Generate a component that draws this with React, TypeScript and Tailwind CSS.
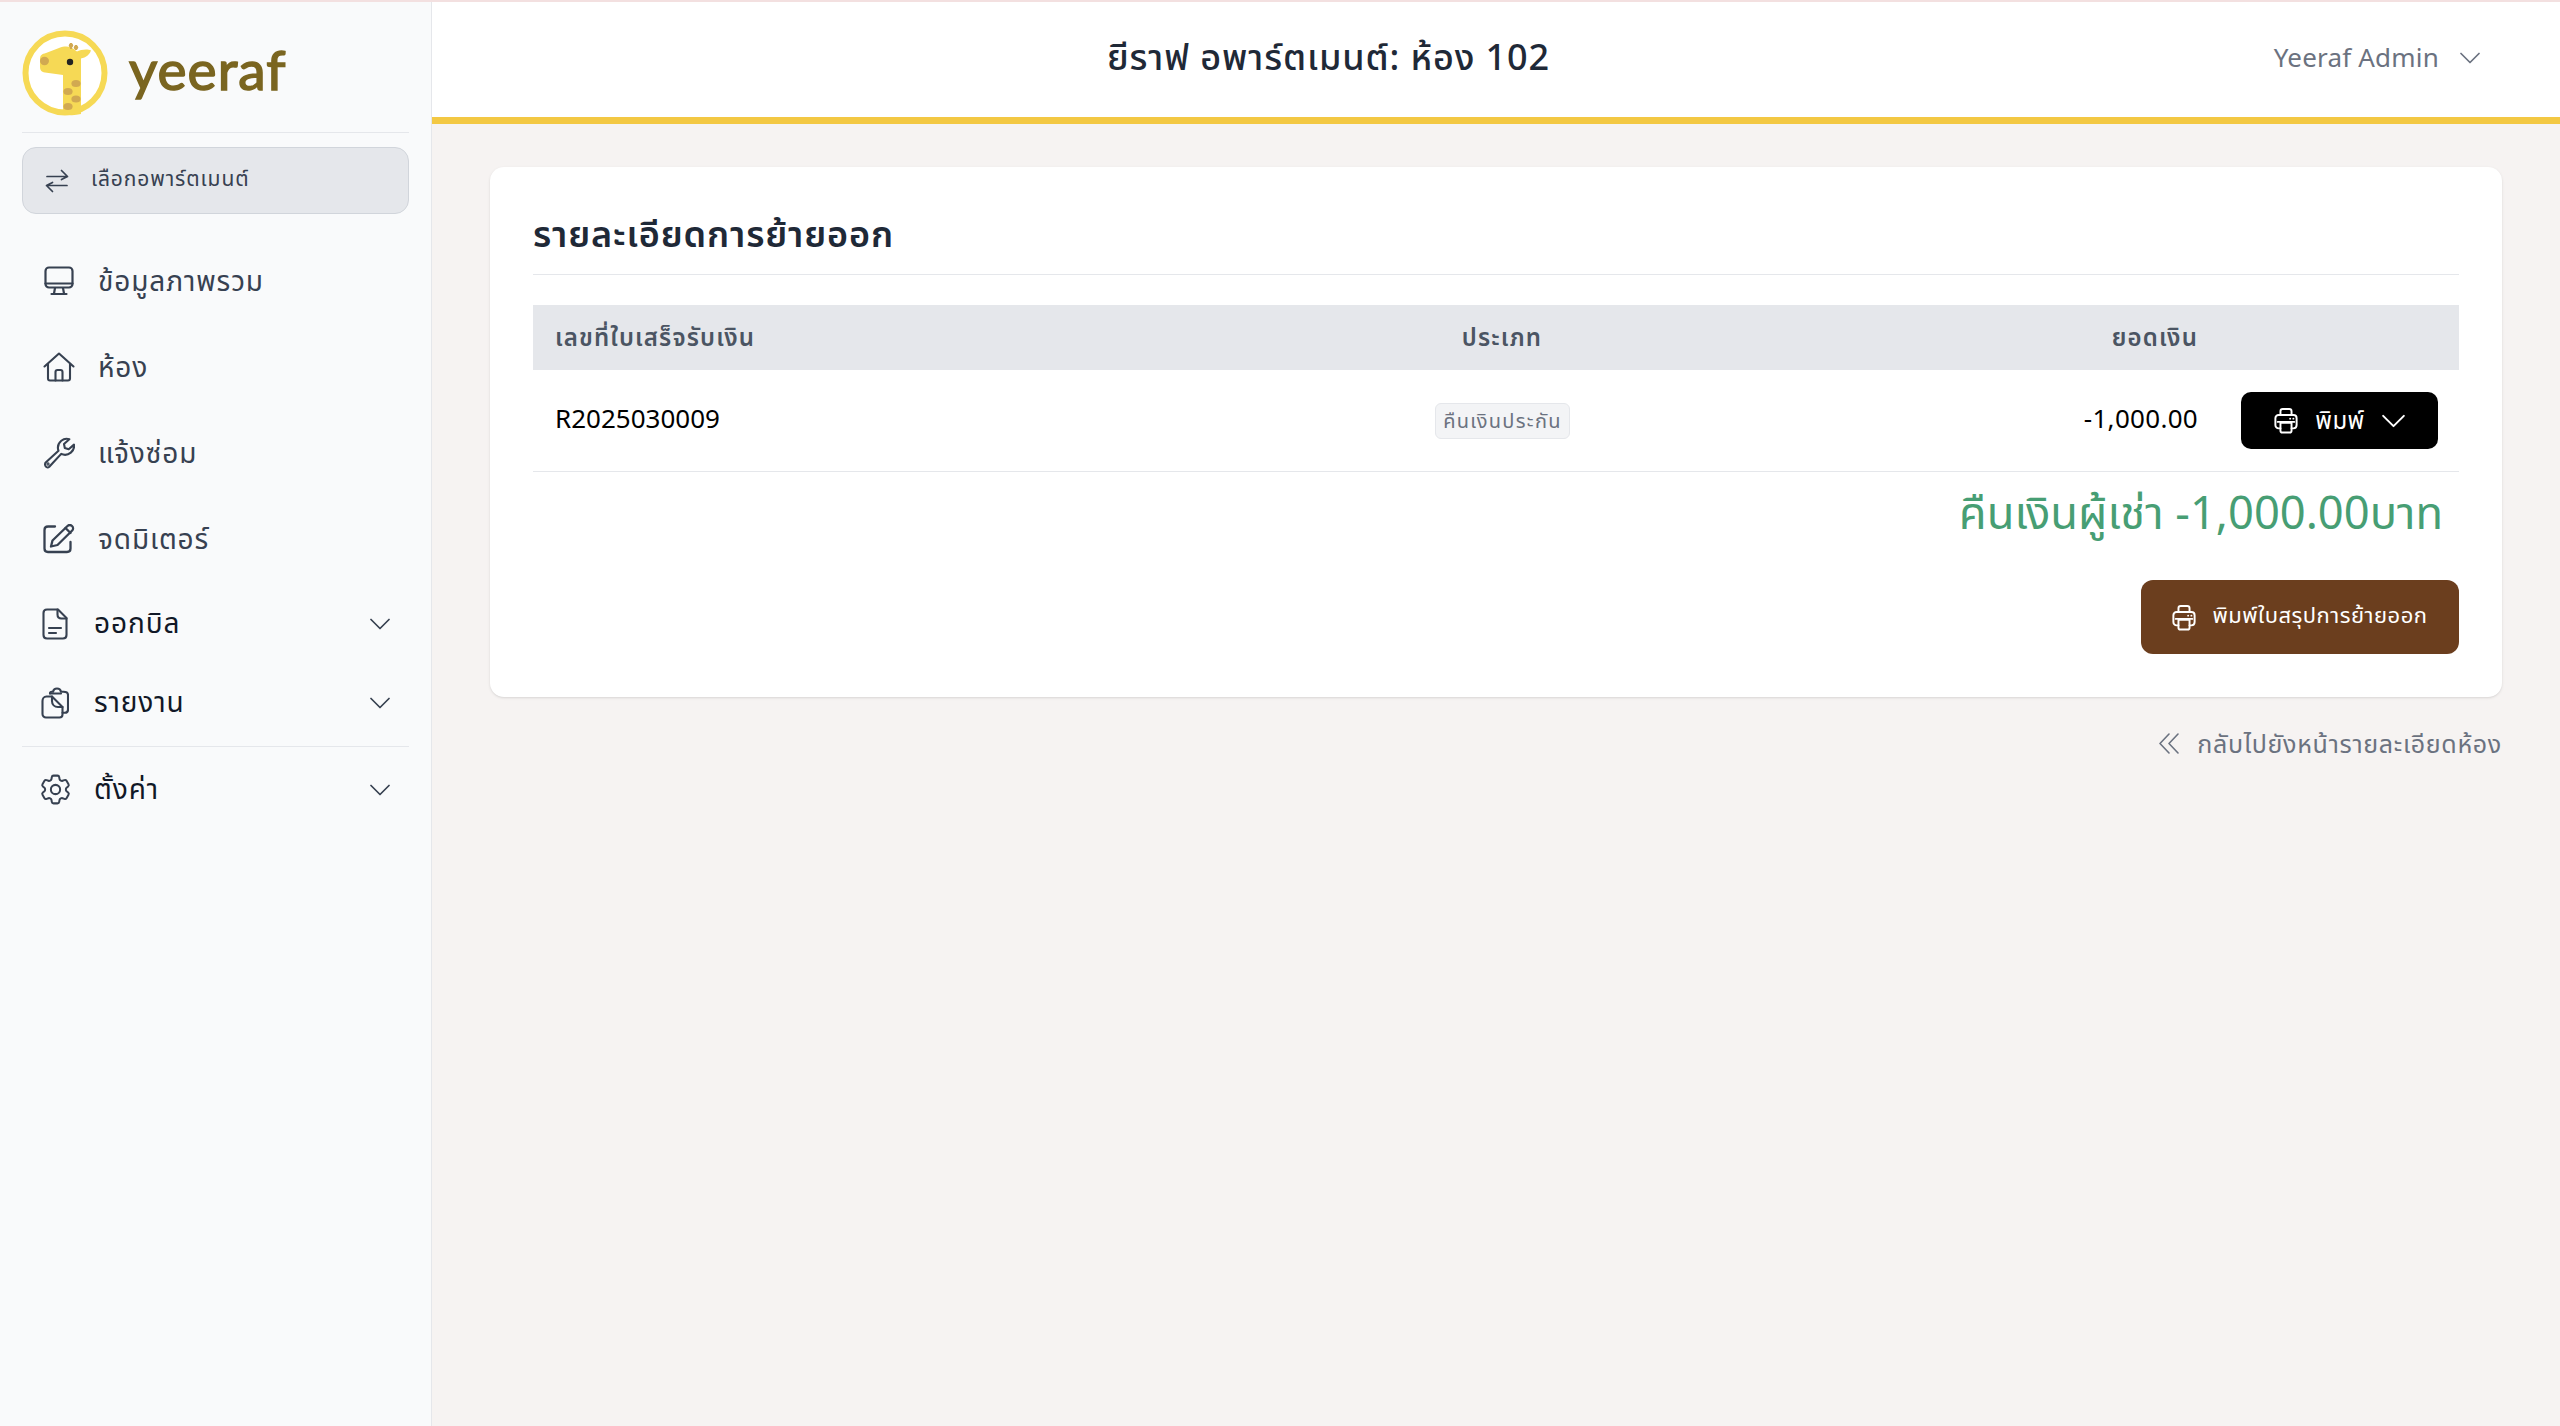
import type { ReactNode } from "react";

const font = "font-['Noto_Sans','Noto_Sans_Thai','Noto_Sans_CJK_SC',sans-serif]";

// ── Icons ────────────────────────────────────────────
function Ico({ w, h, vb = "0 0 24 24", sw = 2, children }: { w: number; h: number; vb?: string; sw?: number; children: ReactNode }) {
  return (
    <svg width={w} height={h} viewBox={vb} fill="none" stroke="currentColor" strokeWidth={sw} strokeLinecap="round" strokeLinejoin="round" className="shrink-0">
      {children}
    </svg>
  );
}

const Chevron = ({ w = 20 }: { w?: number }) => (
  <Ico w={w} h={Math.round(w * 0.6)} vb="0 0 20 12" sw={1.7}>
    <path d="M1 1.5 10 10.5 19 1.5" />
  </Ico>
);

const Printer = () => (
  <Ico w={24} h={27} vb="0 0 26 29" sw={2.1}>
    <path d="M7 8.5V4.5C7 2.8 8 2 9.5 2h7C18 2 19 2.8 19 4.5v4" />
    <path d="M7 23H5c-2 0-3.5-1.500-3.500-3.500V12c0-2 1.500-3.500 3.500-3.500h16c2 0 3.500 1.500 3.500 3.500v7.500c0 2-1.500 3.500-3.500 3.500h-2" />
    <path d="M7 17h12v8.500c0 1.500-1 2-2 2H9c-1 0-2-.5-2-2z" />
    <path d="M17.500 12.500h.01M21 12.500h.01" />
    <path d="M4 16h18" />
  </Ico>
);

const Monitor = () => (
  <Ico w={30} h={30} vb="0 0 30 30" sw={2.2}>
    <rect x="1.500" y="1.500" width="27" height="20" rx="3.500" />
    <path d="M1.500 17.500h27" />
    <path d="M11 22l-1 5.500M19 22l1 5.500M7.500 28h15" />
  </Ico>
);

const Home = () => (
  <Ico w={32} h={30} vb="0 0 32 30" sw={2.100}>
    <path d="M1.500 14.500 16 1.500l14.500 13" />
    <path d="M5 12v14.500c0 1.200 .8 2 2 2h18c1.200 0 2-.8 2-2V12" />
    <path d="M12.500 28.500V20c0-1.200 .8-2 2-2h3c1.200 0 2 .8 2 2v8.500" />
  </Ico>
);

const Wrench = () => (
  <Ico w={32} h={32} vb="0 0 32 32" sw={2.100}>
    <path d="M2.700 25.500 15.500 13.800c-1.200-3.500-.2-7.500 2.800-10 2.400-2 5.500-2.500 8-1.500l-5.300 4.700.8 4 3.900 1.300 5.300-4.700c.4 3-.8 6-3.200 8-2.800 2.300-6.500 2.700-9.600 1.300L6.300 29.800c-1 .9-2.500 .8-3.400-.2-1-1.100-1.200-3.100-.2-4.100z" />
    <circle cx="5" cy="27" r=".6" />
  </Ico>
);

const PenSquare = () => (
  <Ico w={32} h={30} vb="0 0 32 30" sw={2.300}>
    <path d="M12 2.500H5C2.800 2.500 1.500 4 1.500 6v18.500c0 2 1.300 3.500 3.500 3.500h19c2 0 3.500-1.500 3.500-3.500V18" />
    <path d="M8 22.500l1.500-6L24.500 2c1.300-1.200 3.200-1.200 4.500 0s1.400 3.200 .2 4.500L14.500 21z" />
    <path d="M22.500 4l5 5" />
  </Ico>
);

const FileDoc = () => (
  <Ico w={26} h={32} vb="0 0 26 32" sw={2.100}>
    <path d="M16 1.500H5C2.800 1.500 1.500 3 1.500 5v22c0 2 1.300 3.500 3.500 3.500h16c2 0 3.500-1.500 3.500-3.500V10z" />
    <path d="M15.500 1.500v5c0 2.500 1.500 4 4 4h5" />
    <path d="M7 20h12M7 25h7" />
  </Ico>
);

const ClipPage = () => (
  <Ico w={28} h={32} vb="0 0 28 32" sw={2.100}>
    <path d="M9 6.500c0-1 .6-1.700 1.700-1.700h1.300c.4-2 2-3.300 4-3.300s3.600 1.300 4 3.300h2.500C25.800 4.800 27 6 27 8v14.500c0 2-1.200 3.200-3 3.200h-2.500" />
    <path d="M9 6.500h11" />
    <path d="M1.500 14c0-2.500 1.500-4.500 4-4.500H11l10.500 10.500v7.500c0 2-1.300 3-3 3H5c-2 0-3.500-1.500-3.500-3.500z" />
    <path d="M11 9.500v4.500c0 3.500 2.500 6 6 6h4.500" />
  </Ico>
);

const Gear = () => (
  <Ico w={37} h={37} vb="0 0 24 24" sw={1.300}>
    <path d="M9.594 3.940c.09-.542.560-.94 1.110-.94h2.593c.550 0 1.020.398 1.110.940l.213 1.281c.063.374.313.686.645.870.074.040.147.083.220.127.325.196.720.257 1.075.124l1.217-.456a1.125 1.125 0 0 1 1.370.490l1.296 2.247a1.125 1.125 0 0 1-.260 1.431l-1.003.827c-.293.241-.438.613-.430.992a7.723 7.723 0 0 1 0 .255c-.008.378.137.750.430.991l1.004.827c.424.350.534.955.260 1.430l-1.298 2.247a1.125 1.125 0 0 1-1.369.491l-1.217-.456c-.355-.133-.750-.072-1.076.124a6.470 6.470 0 0 1-.220.128c-.331.183-.581.495-.644.869l-.213 1.281c-.090.543-.560.940-1.110.940h-2.594c-.550 0-1.019-.398-1.110-.940l-.213-1.281c-.062-.374-.312-.686-.644-.870a6.520 6.520 0 0 1-.220-.127c-.325-.196-.720-.257-1.076-.124l-1.217.456a1.125 1.125 0 0 1-1.369-.490l-1.297-2.247a1.125 1.125 0 0 1 .260-1.431l1.004-.827c.292-.240.437-.613.430-.991a6.932 6.932 0 0 1 0-.255c.007-.380-.138-.751-.430-.992l-1.004-.827a1.125 1.125 0 0 1-.260-1.430l1.297-2.247a1.125 1.125 0 0 1 1.370-.491l1.216.456c.356.133.751.072 1.076-.124.072-.044.146-.086.220-.128.332-.183.582-.495.644-.869l.214-1.280Z" />
    <path d="M15 12a3 3 0 1 1-6 0 3 3 0 0 1 6 0Z" />
  </Ico>
);

const Arrows = () => (
  <Ico w={24} h={24} vb="0 0 24 24" sw={1.700}>
    <path d="M2 7.500h20.500M16.500 1.500l6 6-6 3" />
    <path d="M22 16.500H1.500M7.500 22.500l-6-6 6-3" />
  </Ico>
);

const DoubleLeft = () => (
  <Ico w={20} h={21} vb="0 0 20 21" sw={1.600}>
    <path d="M10 1 1 10.500 10 20" />
    <path d="M19 1 10 10.500 19 20" />
  </Ico>
);

function Logo() {
  return (
    <svg viewBox="0 0 86 86" className="w-[86px] h-[86px] shrink-0">
      <circle cx="43" cy="43" r="39.500" fill="#fff" stroke="#f6d955" strokeWidth="6" />
      <path d="M41 84V45L23 42.500C19 42 18 40 18 36V29C18 25 20 24 24 23L37 18C44 15.500 49 16.500 53 20L59 25V84C53 85.500 47 85.500 41 84Z" fill="#f6d955" />
      <path d="M54 22C60 19 66 19 69 20.500C67 26 62 28.500 57 28.500Z" fill="#f6d955" />
      <path d="M49 19V13M54 20V15" stroke="#d1a951" strokeWidth="2" />
      <circle cx="49" cy="15.500" r="2.200" fill="#d1a951" />
      <circle cx="54" cy="17.500" r="2.200" fill="#d1a951" />
      <ellipse cx="22.500" cy="31" rx="4.500" ry="4.200" fill="#d1a951" />
      <circle cx="48" cy="32" r="3.200" fill="#222" />
      <ellipse cx="54" cy="53.500" rx="4.600" ry="3.500" fill="#d1a951" />
      <ellipse cx="46" cy="61.500" rx="4.600" ry="3.500" fill="#d1a951" />
      <ellipse cx="54" cy="69" rx="4.600" ry="3.500" fill="#d1a951" />
      <ellipse cx="46" cy="76.500" rx="4.600" ry="3.500" fill="#d1a951" />
    </svg>
  );
}

// ── Sidebar ──────────────────────────────────────────
function NavLink({ icon, label }: { icon: ReactNode; label: string }) {
  return (
    <div className="flex items-center h-[86px] pl-[20px]">
      <span className="w-[34px] flex justify-center text-[#374151]">{icon}</span>
      <span className="ml-[22px] text-[28px] tracking-[0.9px] text-[#374151] -mt-[3px]">{label}</span>
    </div>
  );
}

function NavGroup({ icon, label }: { icon: ReactNode; label: string }) {
  return (
    <div className="flex items-center h-[79px] pl-[18px] pr-[19px]">
      <span className="w-[30px] flex justify-center text-[#374151]">{icon}</span>
      <span className="ml-[24px] flex-1 text-[28px] tracking-[0.9px] text-[#111827] -mt-[3px]">{label}</span>
      <span className="text-[#374151]"><Chevron /></span>
    </div>
  );
}

function Sidebar() {
  return (
    <aside className="w-[432px] shrink-0 bg-[#f9fafb] border-r border-[#e5e7eb] px-[22px]">
      <div className="flex items-center gap-[21px] h-[131px] border-b border-[#e5e7eb] pt-[27px] pb-[16px]">
        <Logo />
        <span className="font-['Lato',sans-serif] font-normal text-[55px] leading-none tracking-[1px] text-[#7a6520] [-webkit-text-stroke:1.5px_#7a6520] -mt-[6px]">yeeraf</span>
      </div>
      <button className="mt-[14px] w-full h-[67px] flex items-center pl-[22px] rounded-[14px] bg-[#e5e7eb] border border-[#d1d5db] text-[#374151]">
        <Arrows />
        <span className="ml-[22px] text-[21px] tracking-[0.9px] -mt-[3px]">เลือกอพาร์ตเมนต์</span>
      </button>
      <nav className="mt-[24px]">
        <NavLink icon={<Monitor />} label="ข้อมูลภาพรวม" />
        <NavLink icon={<Home />} label="ห้อง" />
        <NavLink icon={<Wrench />} label="แจ้งซ่อม" />
        <NavLink icon={<PenSquare />} label="จดมิเตอร์" />
        <div className="mt-[2px]">
          <NavGroup icon={<FileDoc />} label="ออกบิล" />
          <NavGroup icon={<ClipPage />} label="รายงาน" />
        </div>
        <div className="border-t border-[#e5e7eb] mt-[4px] pt-[3px]">
          <NavGroup icon={<Gear />} label="ตั้งค่า" />
        </div>
      </nav>
    </aside>
  );
}

// ── Page ─────────────────────────────────────────────
export default function App() {
  return (
    <div className={`${font} w-full h-[1426px] flex flex-col bg-[#f6f3f2] overflow-hidden`}>
      <div className="h-[2px] bg-[#f3e0e0] shrink-0" />
      <div className="flex flex-1 min-h-0">
        <Sidebar />
        <main className="flex-1 min-w-0">
          <header className="h-[122px] bg-white border-b-[7px] border-[#f3c843] flex items-center justify-between pl-[675px] pr-[80px] pb-[6px]">
            <h1 className="text-[36px] tracking-[0.9px] font-medium text-[#1f2937] whitespace-nowrap">ยีราฟ อพาร์ตเมนต์: ห้อง 102</h1>
            <div className="flex items-center gap-[21px] text-[26px] tracking-[0.2px] text-[#6b7280] mt-[2px]">
              Yeeraf Admin
              <Chevron />
            </div>
          </header>
          <div className="pl-[58px] pr-[58px] pt-[43px]">
            <section className="bg-white rounded-[14px] shadow px-[43px] pt-[36px] h-[530px]">
              <h2 className="text-[36px] tracking-[0.85px] font-semibold text-[#1f2937] h-[72px] border-b border-[#e5e7eb] leading-[62px]">รายละเอียดการย้ายออก</h2>
              <div className="mt-[30px] h-[65px] grid grid-cols-[1fr_1fr_1fr] items-center bg-[#e5e7eb] text-[24px] tracking-[1.150px] font-semibold text-[#4b5563] pb-[2px]">
                <div className="pl-[22px]">เลขที่ใบเสร็จรับเงิน</div>
                <div className="text-center pl-[12px]">ประเภท</div>
                <div className="text-right pr-[261px]">ยอดเงิน</div>
              </div>
              <div className="h-[102px] flex items-center border-b border-[#e5e7eb] text-[26px] text-black">
                <div className="pl-[22px] w-[1px] grow -mt-[4px]">R2025030009</div>
                <div className="w-[1px] grow flex justify-center pl-[12px]">
                  <span className="text-[20px] tracking-[1.300px] text-[#6b7280] bg-[#f3f4f6] border border-[#e5e7eb] rounded-[6px] px-[7px] py-[2px]">คืนเงินประกัน</span>
                </div>
                <div className="w-[1px] grow flex items-center justify-end pr-[21px]">
                  <span className="-mt-[4px] tracking-[0.3px]">-1,000.00</span>
                  <button className="ml-[43px] w-[197px] h-[57px] rounded-[10px] bg-black text-white text-[24px] tracking-[0.5px] flex items-center justify-center gap-[17px]">
                    <Printer />
                    <span className="-mt-[2px]">พิมพ์</span>
                    <Chevron w={23} />
                  </button>
                </div>
              </div>
              <p className="mt-[10px] text-right pr-[16px] text-[45.3px] leading-[60px] text-[#479e74]">คืนเงินผู้เช่า -1,000.00บาท</p>
              <div className="mt-[38px] flex justify-end">
                <button className="w-[318px] h-[74px] rounded-[12px] bg-[#6b3e1e] text-white text-[22px] tracking-[0.500px] flex items-center justify-center gap-[16px]">
                  <Printer />
                  <span className="-mt-[5px]">พิมพ์ใบสรุปการย้ายออก</span>
                </button>
              </div>
            </section>
            <div className="mt-[28px] flex items-center justify-end gap-[18px] text-[25px] tracking-[0.7px] text-[#6b7280]">
              <DoubleLeft />
              กลับไปยังหน้ารายละเอียดห้อง
            </div>
          </div>
        </main>
      </div>
    </div>
  );
}
